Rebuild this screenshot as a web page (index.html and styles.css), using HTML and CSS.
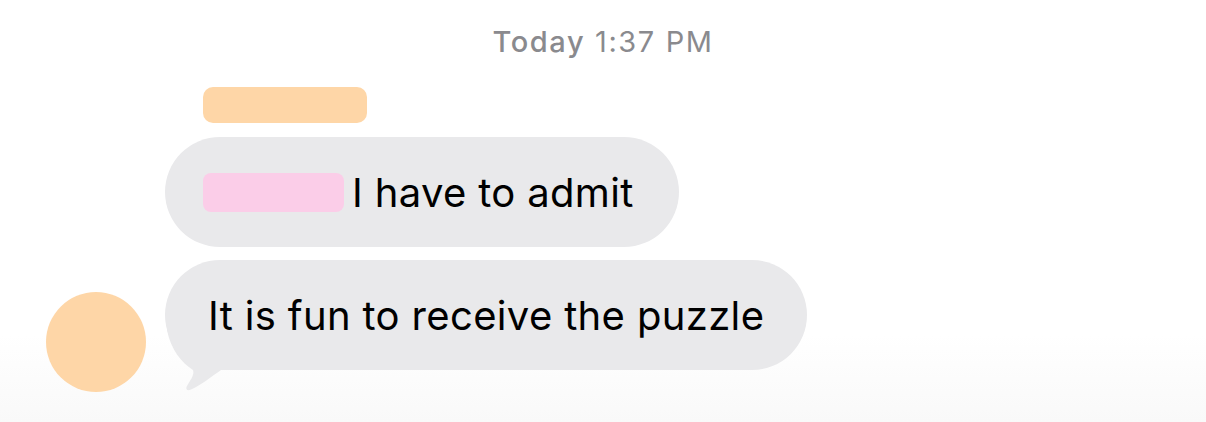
FILE: index.html
```html
<!DOCTYPE html>
<html>
<head>
<meta charset="utf-8">
<link rel="stylesheet" href="styles.css">
</head>
<body>
<div class="page">
  <div class="time"><span class="day">Today</span> 1:37 PM</div>
  <div class="thread">
    <div class="avatar"></div>
    <div class="messages">
      <div class="name-bar"></div>
      <div class="bubble"><span class="mention"></span><span class="text">I have to admit</span></div>
      <div class="bubble last">
        <span class="text">It is fun to receive the puzzle</span>
        <svg class="tail" width="60" height="62" viewBox="0 0 60 62"><path d="M2 0 L60 0 L60 40 L56 40 C46 47 36 55 26 59.5 C23 61 20.5 60 21.5 57 C24.5 51 30 45 28 40 C16 32 6 20 2 0 Z" fill="#e9e9eb"/></svg>
      </div>
    </div>
  </div>
</div>
</body>
</html>
```

FILE: styles.css
```css
html, body {
  margin: 0;
  padding: 0;
}
body {
  width: 1206px;
  height: 422px;
  overflow: hidden;
  background: linear-gradient(to bottom, #ffffff 0px, #ffffff 335px, #f9f9f9 422px);
  font-family: Inter, "Noto Sans", sans-serif;
}
.page {
  display: flex;
  flex-direction: column;
  padding-top: 24px;
}
.time {
  text-align: center;
  color: #8a8a8e;
  font-size: 29px;
  line-height: 36px;
  letter-spacing: 1.6px;
}
.day {
  font-weight: 500;
}
.thread {
  display: flex;
  align-items: flex-end;
  gap: 19px;
  padding-left: 46px;
  margin-top: 27px;
}
.avatar {
  width: 100px;
  height: 100px;
  border-radius: 50%;
  background: #fed6a7;
  flex: none;
}
.messages {
  display: flex;
  flex-direction: column;
  align-items: flex-start;
  padding-bottom: 22px;
}
.name-bar {
  width: 164px;
  height: 36px;
  border-radius: 10px;
  background: #fed6a7;
  margin-left: 38px;
  margin-bottom: 14px;
}
.bubble {
  position: relative;
  display: flex;
  align-items: center;
  height: 110px;
  box-sizing: border-box;
  padding: 0 45px 0 38px;
  border-radius: 55px;
  background: #e9e9eb;
  color: #000;
  font-size: 40px;
  letter-spacing: 0.35px;
}
.bubble.last {
  margin-top: 13px;
  padding-left: 43px;
  padding-right: 43px;
}
.mention {
  width: 141px;
  height: 39px;
  border-radius: 8px;
  background: #fbcde8;
  margin-right: 8px;
  flex: none;
}
.text {
  position: relative;
  z-index: 1;
  white-space: nowrap;
}
.tail {
  position: absolute;
  left: 0;
  top: 70px;
}
```
